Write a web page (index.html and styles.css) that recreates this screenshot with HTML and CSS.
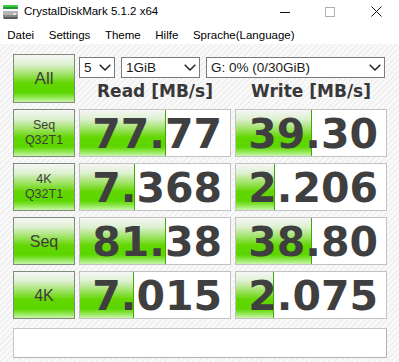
FILE: index.html
```html
<!DOCTYPE html>
<html lang="de">
  <head>
    <meta charset="UTF-8" />
    <meta name="viewport" content="width=device-width, initial-scale=1.0" />
    <title>CrystalDiskMark 5.1.2 x64</title>
    <link rel="stylesheet" href="styles.css">
  </head>
  <body>
    <div class="window">
      <div class="titlebar">
        <svg class="app-icon" width="16" height="16" viewBox="0 0 16 16">
          <rect x="1" y="1" width="15" height="2" rx="1" fill="#3cc83c" />
          <rect x="1" y="3" width="15" height="2" fill="#1e9a2e" />
          <rect x="1" y="7" width="15" height="8" rx="1" fill="#8a8a8a" />
          <rect x="1" y="7" width="15" height="4" rx="1" fill="#b4b4b4" />
          <rect x="2" y="13" width="13" height="2" fill="#5a5a5a" />
          <rect x="11" y="9" width="3" height="2" fill="#e6e6e6" />
        </svg>
        <span class="title">CrystalDiskMark 5.1.2 x64</span>
        <div class="controls">
          <span class="ctl">
            <svg width="10" height="10" viewBox="0 0 10 10"><path d="M0 5.5h10" stroke="#111" stroke-width="1" /></svg>
          </span>
          <span class="ctl">
            <svg width="10" height="10" viewBox="0 0 10 10"><rect x="0.5" y="0.5" width="9" height="9" fill="none" stroke="#b0b0b0" stroke-width="1" /></svg>
          </span>
          <span class="ctl">
            <svg width="11" height="11" viewBox="0 0 11 11"><path d="M0.5 0.5l10 10M10.5 0.5l-10 10" stroke="#111" stroke-width="1" /></svg>
          </span>
        </div>
      </div>

      <div class="menubar">
        <span class="menu-item">Datei</span>
        <span class="menu-item">Settings</span>
        <span class="menu-item">Theme</span>
        <span class="menu-item">Hilfe</span>
        <span class="menu-item">Sprache(Language)</span>
      </div>

      <div class="main">
        <div class="bench-grid">
          <div class="run-btn run-all">All</div>
          <div class="top-right">
            <div class="selects">
              <div class="select select-count">
                <span>5</span>
                <svg class="chevron" width="12" height="7" viewBox="0 0 12 7"><path d="M0.7 0.7l5.3 5.3 5.3-5.3" fill="none" stroke="#1a1a1a" stroke-width="1.4" /></svg>
              </div>
              <div class="select select-size">
                <span>1GiB</span>
                <svg class="chevron" width="12" height="7" viewBox="0 0 12 7"><path d="M0.7 0.7l5.3 5.3 5.3-5.3" fill="none" stroke="#1a1a1a" stroke-width="1.4" /></svg>
              </div>
              <div class="select select-drive">
                <span>G: 0% (0/30GiB)</span>
                <svg class="chevron" width="12" height="7" viewBox="0 0 12 7"><path d="M0.7 0.7l5.3 5.3 5.3-5.3" fill="none" stroke="#1a1a1a" stroke-width="1.4" /></svg>
              </div>
            </div>
            <div class="headers">
              <div class="col-head">Read [MB/s]</div>
              <div class="col-head">Write [MB/s]</div>
            </div>
          </div>

          <div class="run-btn">Seq<br />Q32T1</div>
          <div class="result"><div class="fill" style="width: 86px"></div><span class="value">77.77</span></div>
          <div class="result"><div class="fill" style="width: 76px"></div><span class="value">39.30</span></div>

          <div class="run-btn">4K<br />Q32T1</div>
          <div class="result"><div class="fill" style="width: 55px"></div><span class="value">7.368</span></div>
          <div class="result"><div class="fill" style="width: 39px"></div><span class="value">2.206</span></div>

          <div class="run-btn run-single">Seq</div>
          <div class="result"><div class="fill" style="width: 86px"></div><span class="value">81.38</span></div>
          <div class="result"><div class="fill" style="width: 76px"></div><span class="value">38.80</span></div>

          <div class="run-btn run-single">4K</div>
          <div class="result"><div class="fill" style="width: 54px"></div><span class="value">7.015</span></div>
          <div class="result"><div class="fill" style="width: 38px"></div><span class="value">2.075</span></div>
        </div>

        <div class="comment"></div>
      </div>
    </div>
  </body>
</html>
```

FILE: styles.css
```css
body {
  margin: 0;
  font-family: "Liberation Sans", Arial, sans-serif;
  background: #ffffff;
}

.window {
  width: 399px;
  height: 362px;
  display: flex;
  flex-direction: column;
  overflow: hidden;
}

/* title bar */
.titlebar {
  height: 23px;
  display: flex;
  align-items: center;
  background: #ffffff;
  flex-shrink: 0;
}

.app-icon {
  margin: 0 0 0 2px;
}

.title {
  margin-left: 6px;
  font-size: 11.5px;
  color: #000000;
  padding-bottom: 1px;
}

.controls {
  margin-left: auto;
  display: flex;
  height: 100%;
}

.ctl {
  width: 46px;
  display: flex;
  align-items: center;
  justify-content: center;
}

.ctl:first-child {
  width: 44px;
}

/* menu */
.menubar {
  height: 19px;
  display: flex;
  align-items: center;
  padding: 2px 0 0 0;
  background: #ffffff;
  flex-shrink: 0;
}

.menu-item {
  font-size: 11.5px;
  color: #000000;
  padding: 0 7.3px;
}

/* main area */
.main {
  flex: 1;
  padding: 10px 0 0 13px;
  background: repeating-linear-gradient(135deg, #f1f1f1 0, #f1f1f1 2px, #fafafa 2px, #fafafa 4px);
}

.bench-grid {
  display: grid;
  grid-template-columns: 62px 152px 152px;
  grid-template-rows: 49px 48px 48px 48px 48px;
  column-gap: 4px;
  row-gap: 6px;
}

.run-btn {
  box-sizing: border-box;
  border: 1px solid #7d8c7b;
  background: linear-gradient(to bottom, #f6f6f6 0%, #ddf0d0 20%, #9ce260 42%, #62d600 60%, #5cd600 80%, #8ee64c 90%, #c9f6ac 100%);
  display: flex;
  align-items: center;
  justify-content: center;
  text-align: center;
  font-size: 12.5px;
  line-height: 15px;
  color: #3e3e3e;
}

.run-all {
  font-size: 17px;
}

.run-single {
  font-size: 16px;
}

.top-right {
  grid-column: 2 / 4;
  display: flex;
  flex-direction: column;
}

.selects {
  display: flex;
  gap: 6px;
  margin-top: 3px;
}

.select {
  box-sizing: border-box;
  height: 21px;
  border: 1px solid #7a7a7a;
  background: #ffffff;
  display: flex;
  align-items: center;
  padding: 0 3px 0 4px;
  font-size: 13.5px;
  color: #1a1a1a;
}

.select .chevron {
  margin-left: auto;
}

.select-count {
  width: 36px;
}

.select-size {
  width: 79px;
}

.select-drive {
  width: 179px;
}

.headers {
  flex: 1;
  display: grid;
  grid-template-columns: 152px 152px;
  column-gap: 4px;
  align-items: center;
}

.col-head {
  text-align: center;
  font-family: "DejaVu Sans", Verdana, sans-serif;
  font-weight: bold;
  font-size: 17px;
  color: #383838;
  padding-top: 1px;
}

/* result boxes */
.result {
  position: relative;
  box-sizing: border-box;
  border: 1px solid #c2c2c2;
  background: #ffffff;
  overflow: hidden;
  text-align: right;
}

.fill {
  position: absolute;
  left: 0;
  top: 0;
  bottom: 0;
  box-sizing: border-box;
  border-right: 1px solid #41a80c;
  background: linear-gradient(to bottom, #f6f6f6 0%, #ddf0d0 20%, #9ce260 42%, #62d600 60%, #5cd600 80%, #8ee64c 90%, #c9f6ac 100%);
}

.value {
  position: relative;
  display: block;
  padding: 2px 8px 0 0;
  font-family: "DejaVu Sans", Verdana, sans-serif;
  font-weight: bold;
  font-size: 41px;
  line-height: 44px;
  color: #3f3f3f;
}

.comment {
  box-sizing: border-box;
  width: 374px;
  height: 30px;
  margin-top: 9px;
  border: 1px solid #b0b0b0;
  border-top-color: #c8c8c8;
  border-left-color: #c8c8c8;
  background: #ffffff;
}
```
